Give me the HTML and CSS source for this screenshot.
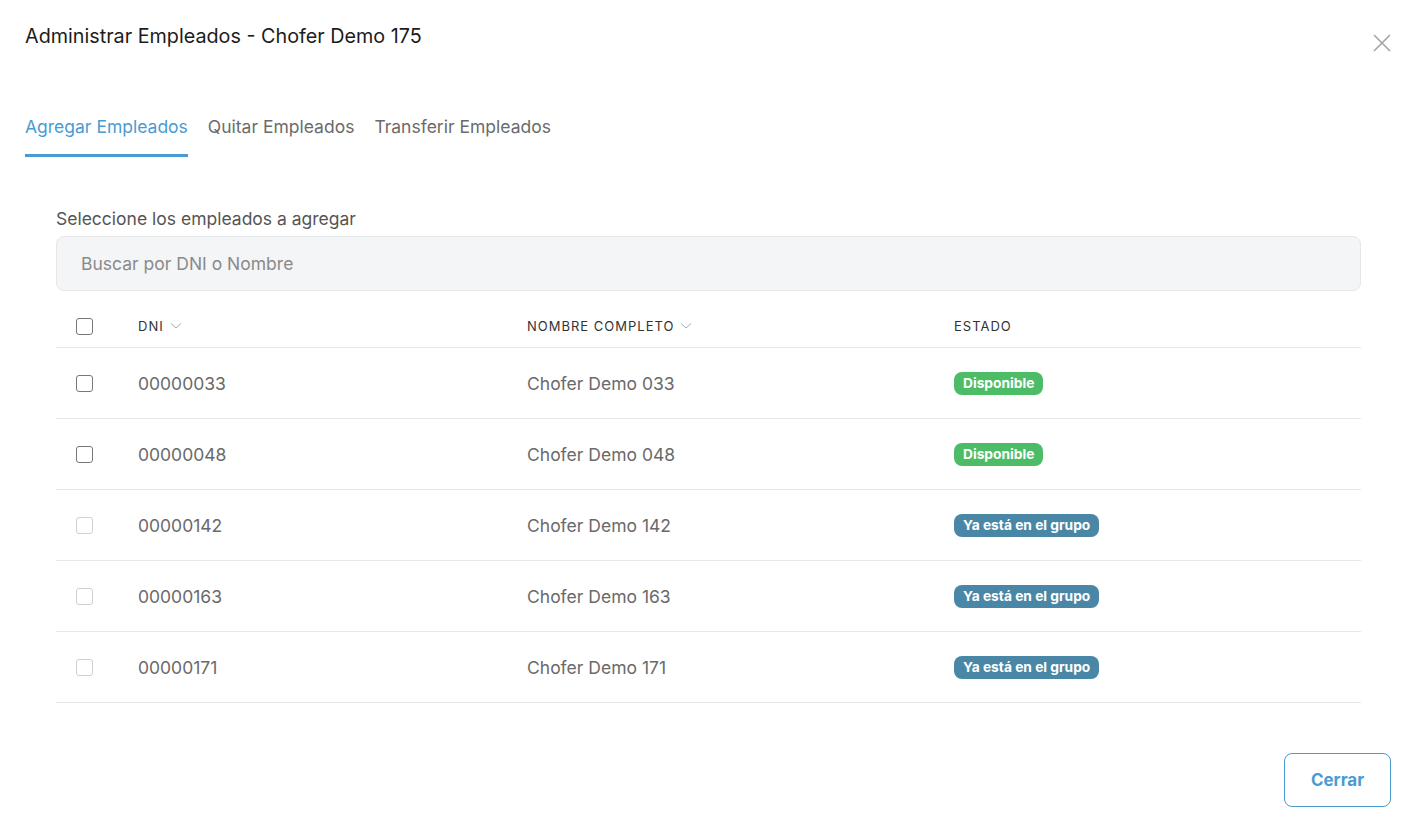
FILE: index.html
```html
<!DOCTYPE html>
<html lang="es">
<head>
<meta charset="utf-8">
<link rel="stylesheet" href="styles.css">
</head>
<body>
<div class="modal">
  <div class="header">
    <h1 class="title">Administrar Empleados - Chofer Demo 175</h1>
    <button class="close" aria-label="Cerrar">
      <svg width="20" height="20" viewBox="0 0 20 20"><path d="M2 2L18 18M18 2L2 18" stroke="#a3a3a3" stroke-width="1.6" fill="none"/></svg>
    </button>
  </div>
  <div class="tabs">
    <div class="tab active">Agregar Empleados</div>
    <div class="tab">Quitar Empleados</div>
    <div class="tab">Transferir Empleados</div>
  </div>
  <div class="content">
    <div class="label">Seleccione los empleados a agregar</div>
    <div class="search">Buscar por DNI o Nombre</div>
    <div class="table">
      <div class="row head">
        <div class="cell chk"><span class="box"></span></div>
        <div class="cell">DNI <svg class="caret" width="12" height="8" viewBox="0 0 12 8"><path d="M1 1.5L6 6L11 1.5" stroke="#aaa" stroke-width="1" fill="none"/></svg></div>
        <div class="cell">NOMBRE COMPLETO <svg class="caret" width="12" height="8" viewBox="0 0 12 8"><path d="M1 1.5L6 6L11 1.5" stroke="#aaa" stroke-width="1" fill="none"/></svg></div>
        <div class="cell">ESTADO</div>
      </div>
      <div class="row">
        <div class="cell chk"><span class="box"></span></div>
        <div class="cell">00000033</div>
        <div class="cell">Chofer Demo 033</div>
        <div class="cell"><span class="badge green">Disponible</span></div>
      </div>
      <div class="row">
        <div class="cell chk"><span class="box"></span></div>
        <div class="cell">00000048</div>
        <div class="cell">Chofer Demo 048</div>
        <div class="cell"><span class="badge green">Disponible</span></div>
      </div>
      <div class="row">
        <div class="cell chk"><span class="box disabled"></span></div>
        <div class="cell">00000142</div>
        <div class="cell">Chofer Demo 142</div>
        <div class="cell"><span class="badge blue">Ya está en el grupo</span></div>
      </div>
      <div class="row">
        <div class="cell chk"><span class="box disabled"></span></div>
        <div class="cell">00000163</div>
        <div class="cell">Chofer Demo 163</div>
        <div class="cell"><span class="badge blue">Ya está en el grupo</span></div>
      </div>
      <div class="row">
        <div class="cell chk"><span class="box disabled"></span></div>
        <div class="cell">00000171</div>
        <div class="cell">Chofer Demo 171</div>
        <div class="cell"><span class="badge blue">Ya está en el grupo</span></div>
      </div>
    </div>
  </div>
  <div class="footer">
    <button class="btn">Cerrar</button>
  </div>
</div>
</body>
</html>
```

FILE: styles.css
```css
* { box-sizing: border-box; }
html, body { margin: 0; padding: 0; background: #fff; }
body { font-family: Inter, "Noto Sans", sans-serif; color: #222; }

.modal { width: 1416px; height: 835px; padding: 0 25px 0 25px; display: flex; flex-direction: column; }

.header { display: flex; justify-content: space-between; align-items: flex-start; padding-top: 24px; }
.title { margin: 0; font-size: 19.75px; font-weight: 400; color: #1c1c1c; line-height: 24px; }
.close { border: 0; background: none; padding: 0; margin-top: 9px; margin-right: -1px; width: 20px; height: 20px; cursor: pointer; }

.tabs { display: flex; gap: 20px; margin-top: 63px; }
.tab { font-size: 17.5px; color: #6b6b6b; line-height: 22px; padding-bottom: 16px; border-bottom: 3px solid transparent; }
.tab.active { color: #4a9bd2; border-bottom-color: #4a9bd2; }

.content { padding: 0 30px 0 31px; margin-top: 51px; }
.label { font-size: 17.5px; color: #555; line-height: 22px; }
.search { margin-top: 6px; height: 55px; background: #f4f5f6; border: 1px solid #e6e7e9; border-radius: 8px; padding: 0 24px; display: flex; align-items: center; font-size: 17.5px; color: #8a8a8a; }

.table { margin-top: 0; }
.row { display: grid; grid-template-columns: 82px 389px 427px 1fr; height: 71px; align-items: center; border-bottom: 1px solid #e8e8e8; font-size: 17.5px; color: #6a6a6a; }
.row.head { height: 57px; font-size: 13px; letter-spacing: 1px; color: #333; padding-top: 23px; align-items: start; }
.row.head .cell { display: flex; align-items: center; height: 24px; }
.cell.chk { padding-left: 20px; display: flex; align-items: center; }
.caret { margin-left: 6px; }
.box { display: inline-block; width: 17px; height: 17px; border: 1px solid #777; border-radius: 3px; background: #fff; }
.box.disabled { border-color: #d0d0d0; }
.badge { display: inline-block; font-size: 13.75px; font-weight: 700; color: #fff; padding: 0 9px; line-height: 23px; border-radius: 8px; letter-spacing: 0; }
.badge.green { background: #4cbd66; }
.badge.blue { background: #4a87a6; }

.footer { margin-top: auto; display: flex; justify-content: flex-end; padding-bottom: 28px; }
.btn { width: 107px; height: 54px; border: 1px solid #4a9bd2; border-radius: 8px; background: #fff; color: #4a9bd2; font-family: Inter, sans-serif; font-size: 17px; font-weight: 700; margin-right: 0; cursor: pointer; }
```
